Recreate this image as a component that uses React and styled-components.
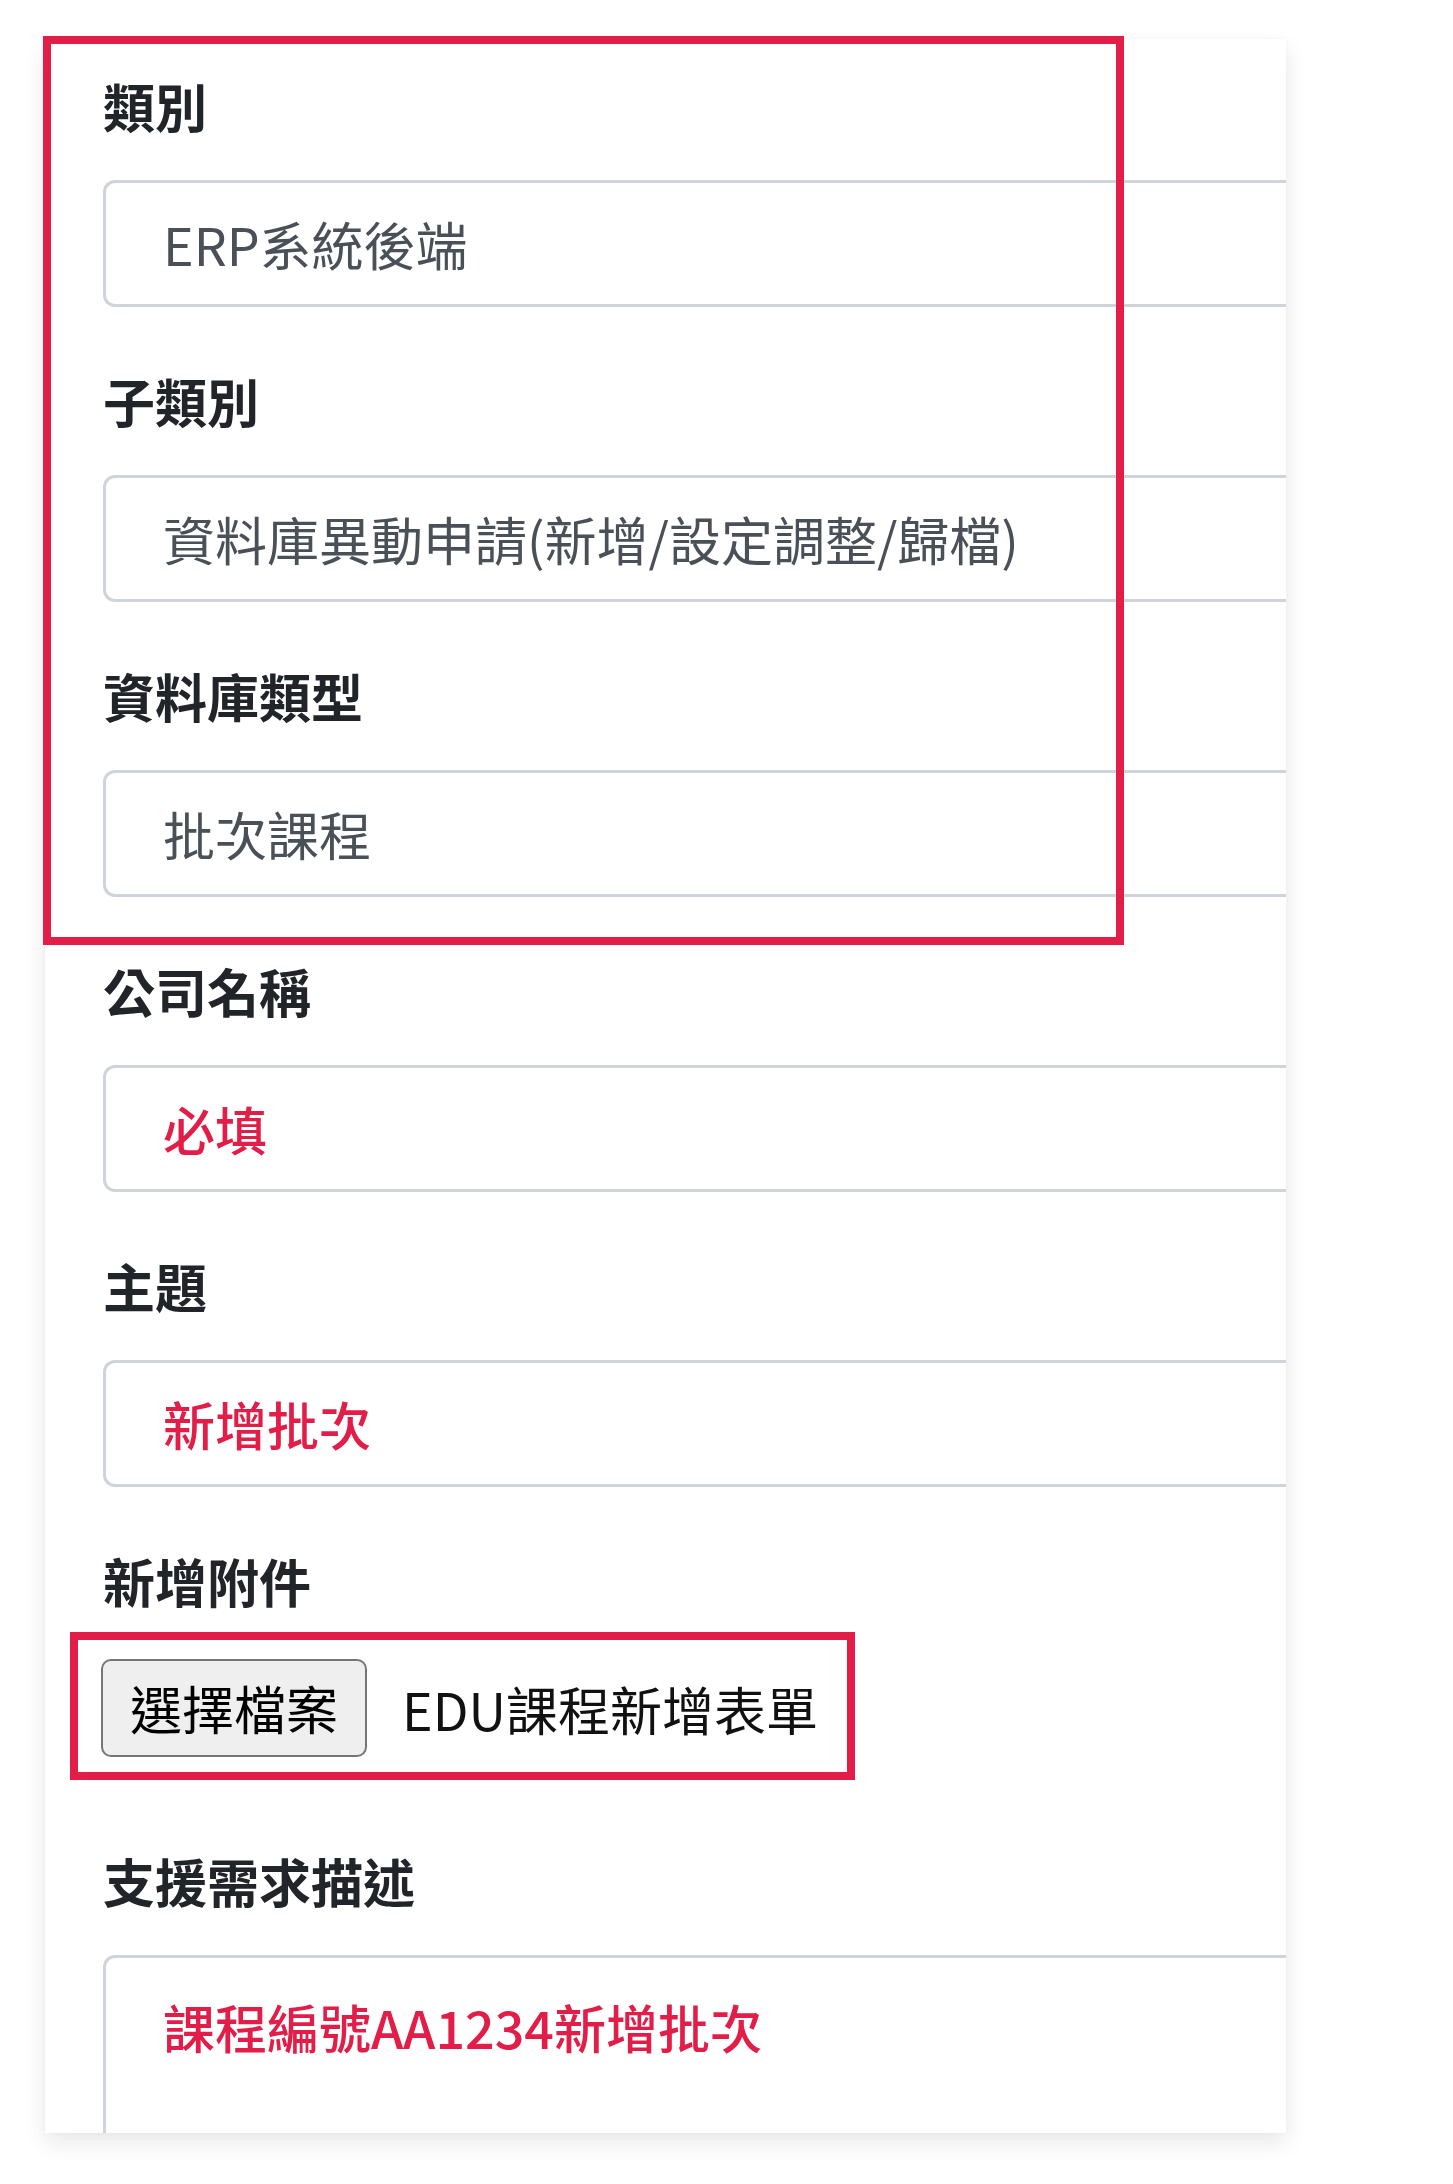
import styled, { createGlobalStyle, css } from "styled-components";

const GlobalStyle = createGlobalStyle`
    body {
        margin: 0;
        background: #fff;
        font-family: "Noto Sans CJK TC", "Noto Sans", sans-serif;
    }
`

const font = `"Noto Sans CJK TC", "Noto Sans", sans-serif`;
const red = "#e11d48";

const highlight = css`
    outline: 8px solid ${red};
    outline-offset: 0;
`

const App = () => {
    return (<Page>
        <GlobalStyle />
        <Shot>
            <Group>
                <Field first>
                    <Label>類別</Label>
                    <Input readOnly value="ERP系統後端" />
                </Field>
                <Field>
                    <Label>子類別</Label>
                    <Input readOnly value="資料庫異動申請(新增/設定調整/歸檔)" />
                </Field>
                <Field>
                    <Label>資料庫類型</Label>
                    <Input readOnly value="批次課程" />
                </Field>
            </Group>
            <Rest>
                <Field first>
                    <Label>公司名稱</Label>
                    <Input readOnly value="必填" $alert />
                </Field>
                <Field>
                    <Label>主題</Label>
                    <Input readOnly value="新增批次" $alert />
                </Field>
                <Field>
                    <Label $gap={28}>新增附件</Label>
                    <FileRow>
                        <FileButton type="button">選擇檔案</FileButton>
                        <FileName>EDU課程新增表單</FileName>
                    </FileRow>
                </Field>
                <Field $top={78}>
                    <Label>支援需求描述</Label>
                    <TextArea readOnly $alert value="課程編號AA1234新增批次" />
                </Field>
            </Rest>
        </Shot>
    </Page>);
}

export default App;

const Page = styled.div`
    width: 1453px;
    min-height: 2184px;
    background: #fff;
    overflow: hidden;
`

const Shot = styled.div`
    width: 1241px;
    margin: 39px 0 0 45px;
    background: #fff;
    box-shadow: 0 10px 22px rgba(0, 0, 0, 0.09), 0 0 6px rgba(0, 0, 0, 0.035);
    display: flex;
    flex-direction: column;
`

const Group = styled.section`
    ${highlight};
    width: 1065px;
    box-sizing: border-box;
    margin: 5px 0 0 6px;
    padding: 31px 0 40px 52px;
`

const Rest = styled.div`
    margin-top: 23px;
    padding-left: 58px;
`

const Field = styled.div`
    margin-top: ${p => p.first ? 0 : (p.$top ?? 63)}px;
`

const Label = styled.label`
    display: block;
    font-family: ${font};
    font-size: 52px;
    line-height: 62px;
    font-weight: 700;
    color: #212529;
    margin-bottom: ${p => p.$gap ?? 43}px;
`

const fieldBox = css`
    display: block;
    box-sizing: border-box;
    width: 1183px;
    border: 3px solid #ced4da;
    border-right: none;
    background: #fff;
    font-family: ${font};
    font-size: 52px;
    font-weight: ${p => p.$alert ? 500 : 400};
    color: ${p => p.$alert ? red : "#495057"};
    outline: none;
    margin: 0;
`

const Input = styled.input`
    ${fieldBox};
    height: 127px;
    padding: 0 57px;
    border-radius: 12px 0 0 12px;
`

const TextArea = styled.textarea`
    ${fieldBox};
    height: 178px;
    padding: 30px 57px 0;
    border-bottom: none;
    border-radius: 12px 0 0 0;
    line-height: 78px;
    resize: none;
    overflow: hidden;
`

const FileRow = styled.div`
    ${highlight};
    display: flex;
    align-items: center;
    gap: 35px;
    width: 769px;
    box-sizing: border-box;
    margin-left: -25px;
    padding: 19px 0 15px 23px;
`

const FileButton = styled.button`
    height: 98px;
    padding: 0 27px;
    font-family: ${font};
    font-size: 52px;
    color: #000;
    background: #efefef;
    border: 2px solid #767676;
    border-radius: 10px;
    line-height: 1;
`

const FileName = styled.span`
    font-family: ${font};
    font-size: 52px;
    color: #111;
    white-space: nowrap;
`
